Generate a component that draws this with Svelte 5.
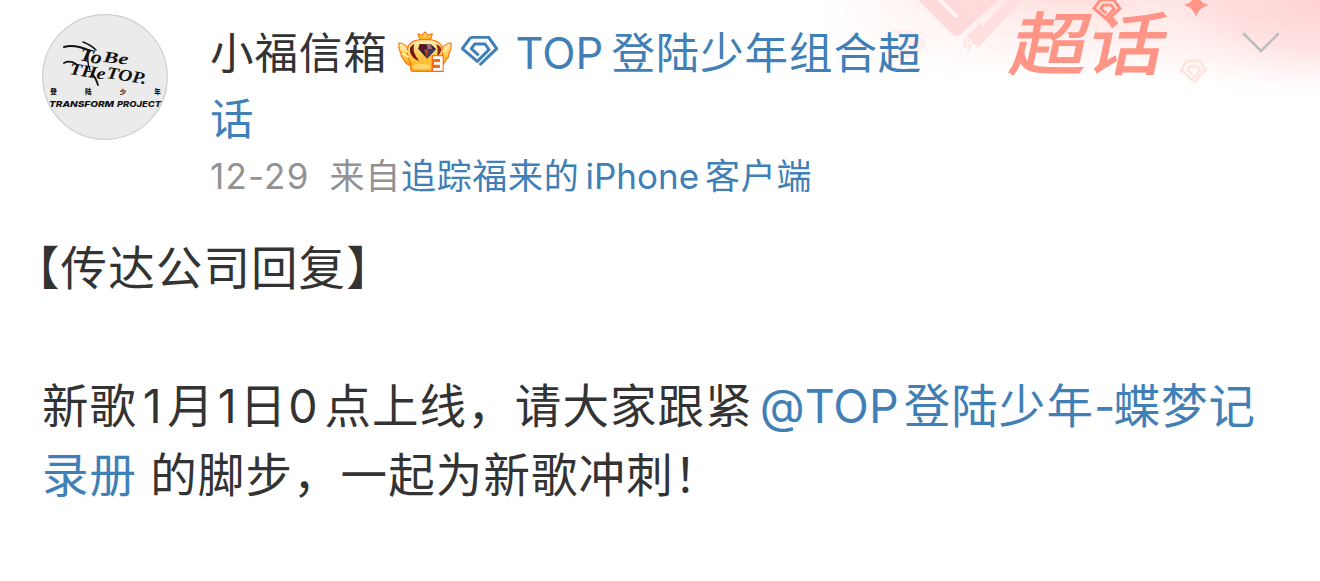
<script>
	const avatarLabel = ["登", "陆", "少", "年"];
	const client = "追踪福来的";
</script>

{#snippet gem()}
	<path d="M29 4H83L107 38L56 87" />
	<path d="M29 4L4 38L49 76L84 41L72 24H41L31 38L53 58" />
{/snippet}

<article class="card">
	<div class="banner">
		<svg class="art" width="500" height="110" viewBox="0 0 500 110">
			<defs>
				<linearGradient id="wash" x1="0.55" y1="0" x2="0.46" y2="1" gradientUnits="objectBoundingBox">
					<stop offset="0" stop-color="#ffe2e1" />
					<stop offset="0.3" stop-color="#ffefed" />
					<stop offset="0.7" stop-color="#fff" />
				</linearGradient>
				<linearGradient id="side" x1="0" y1="0" x2="1" y2="0">
					<stop offset="0" stop-color="#fff" />
					<stop offset="0.45" stop-color="#fff" stop-opacity="0" />
				</linearGradient>
				<radialGradient id="corner" cx="1" cy="0" r="1">
					<stop offset="0" stop-color="#ffd2d5" />
					<stop offset="0.45" stop-color="#ffdcdc" stop-opacity="0.7" />
					<stop offset="1" stop-color="#fff" stop-opacity="0" />
				</radialGradient>
			</defs>
			<rect width="500" height="110" fill="url(#wash)" />
			<rect width="500" height="110" fill="url(#side)" />
			<rect x="280" width="220" height="108" fill="url(#corner)" />
			<path d="M98 0L131 33Q136 38 141 34L178 0Z" fill="#ffdadb" />
			<path d="M118-2L136 16" stroke="#fff3f2" stroke-width="4" stroke-linecap="round" />
			<path d="M203 0L158 48L146 37L160 23L162 26L186 2L184 0Z" fill="#ffdfdf" />
			<path d="M71 30H91L108 44L91 58H71L87 44Z" fill="#ffe9e7" opacity="0.6" />
			<g fill="#ffe9e5">
				<rect x="143" y="39" width="4" height="4" />
				<rect x="148" y="38" width="4" height="4" />
				<rect x="143" y="44" width="4" height="4" />
				<rect x="148" y="44" width="4" height="4" />
				<rect x="147" y="49" width="3" height="3" />
			</g>
			<path d="M376-7Q379 3 389 5Q379 7 376 17Q373 7 364 5Q373 3 376-7Z" fill="#ff9586" />
			<g class="pale" transform="translate(360 60) scale(.24 .26)">{@render gem()}</g>
		</svg>
		<div class="super">超话</div>
		<svg class="super-gem" width="28" height="23" viewBox="0 0 112 92">
			<g class="salmon">
				{@render gem()}
			</g>
		</svg>
	</div>

	<header>
		<svg class="avatar" width="126" height="126" viewBox="0 0 126 126">
			<circle cx="63" cy="63" r="62.3" fill="#ebebeb" stroke="#cecece" stroke-width="1.2" />
			<g class="script">
				<text transform="translate(37 46) rotate(12)" font-size="19" textLength="22" lengthAdjust="spacingAndGlyphs">To</text>
				<text transform="translate(61 48) rotate(6)" font-size="16" textLength="25" lengthAdjust="spacingAndGlyphs">Be</text>
				<text transform="translate(27 60) rotate(9)" font-size="17" textLength="36" lengthAdjust="spacingAndGlyphs">THe</text>
				<text transform="translate(64 64) rotate(9)" font-size="17" textLength="40" lengthAdjust="spacingAndGlyphs">TOP.</text>
			</g>
			<g fill="none" stroke="#111" stroke-linecap="round">
				<path d="M22 33Q33 30 48 37" stroke-width="2" />
				<path d="M41 28Q49 31 54 36M47 36Q44 46 48 56" stroke-width="1.4" />
				<path d="M22 49Q28 46 34 50M50 60Q54 64 56 71" stroke-width="1.8" />
			</g>
			{#each avatarLabel as ch, i}
				<text class="tiny" x={11.5 + i * 34.7} y="80">{ch}</text>
			{/each}
			<text class="wide" x="7" y="92.5" textLength="65" lengthAdjust="spacingAndGlyphs">TRANSFORM</text>
			<text class="wide" x="75" y="92.5" textLength="44" lengthAdjust="spacingAndGlyphs">PROJECT</text>
		</svg>

		<div class="info">
			<div class="name">
				<span>小福信箱</span>
				<svg class="crown" width="54" height="42" viewBox="0 0 162 126">
					<defs>
						<linearGradient id="gold" x1="0" y1="0" x2="0" y2="1">
							<stop offset="0" stop-color="#fff0b8" />
							<stop offset="0.55" stop-color="#ffca45" />
							<stop offset="1" stop-color="#ffab13" />
						</linearGradient>
					</defs>
					<g fill="url(#gold)" stroke="#fb7813" stroke-width="3.5" stroke-linejoin="round">
						<path d="M3 36Q17 36 29 49L38 104Q22 99 17 84Q8 79 9 66Q1 57 3 36Z" />
						<path d="M159 36Q145 36 133 49L124 104Q140 99 145 84Q154 79 153 66Q161 57 159 36Z" />
						<path d="M38 96Q21 62 32 43Q45 24 81 25Q117 24 130 43Q141 62 124 96V113Q124 121 116 121H46Q38 121 38 113Z" />
						<path d="M65 26L60 8L72 13L81 3L90 13L103 8L98 26Z" />
					</g>
					<path d="M12 49L29 63M14 68L33 79M149 49L133 63" stroke="#fff0a8" stroke-width="5" />
					<path d="M49 39Q31 47 37 66Q45 85 63 90Q51 73 47 60Q46 47 49 39Z" fill="#781914" />
					<path d="M114 39Q132 46 130 60Q126 69 117 76Q122 50 114 39Z" fill="#8d2a15" />
					<path d="M65 40H99L114 54L87 83L61 54Z" fill="#35213b" />
					<path d="M65 40H82L78 55H61Z" fill="#611323" />
					<path d="M87 39L98 40L103 54H88Z" fill="#a16b78" />
					<path d="M78 55H91L87 83Z" fill="#c73d26" />
					<path d="M91 55H114L87 83Z" fill="#443e5a" />
					<path d="M45 103Q70 94 98 103V115H45Z" fill="#ffe488" opacity="0.7" />
					<rect x="101" y="72" width="36" height="51" fill="#fb6a12" />
					<path d="M105 80H130V115H105M108 97H130" fill="none" stroke="#fff" stroke-width="8" />
				</svg>
				<svg class="gem" width="37" height="31" viewBox="0 0 111 93">
					{@render gem()}
				</svg>
				<a href="#topic"><span class="en top">TOP</span>登陆少年组合超话</a>
			</div>
			<div class="meta">
				<span class="en date">12-29</span><span>来自</span><a href="#client">{client}<span class="en phone">iPhone</span>客户端</a>
			</div>
		</div>

		<svg class="more" width="38" height="22" viewBox="0 0 38 22">
			<path d="M2 2L19 19L36 2" />
		</svg>
	</header>

	<div class="body">
		<p class="title">【传达公司回复】</p>
		<p>
			新歌<span class="en one">1</span>月<span class="en one second">1</span>日<span class="en zero">0</span>点上线，请大家跟紧<a href="#user"><span class="en at">@TOP</span>登陆少年<span class="en dash">-</span>蝶梦记<br />录册</a><span class="gap"></span>的脚步，一起为新歌冲刺！
		</p>
	</div>
</article>

<style>
	:global(body) {
		margin: 0;
		background: #fff;
	}
	.card {
		position: relative;
		box-sizing: border-box;
		width: 1320px;
		height: 581px;
		padding: 14px 40px 0 42px;
		overflow: hidden;
		color: #333;
		font-family: "Noto Sans CJK SC", sans-serif;
	}
	a {
		color: #417fb7;
		text-decoration: none;
	}
	.en {
		font-family: Inter, "Liberation Sans", sans-serif;
		letter-spacing: 0;
		line-height: 1;
	}

	.banner {
		position: absolute;
		top: 0;
		right: 0;
		width: 500px;
		height: 110px;
	}
	.art {
		display: block;
	}
	.pale {
		fill: none;
		stroke: #ffe5df;
		stroke-width: 11;
	}
	.super {
		position: absolute;
		left: 194px;
		top: 0;
		font-size: 68px;
		line-height: 80px;
		font-weight: 400;
		color: #ff9586;
		-webkit-text-stroke: 1.5px #ff9586;
		transform: skewX(-12deg) scaleX(1.13);
		transform-origin: 0 50%;
	}
	.super-gem {
		position: absolute;
		left: 273px;
		top: -1px;
		overflow: visible;
	}
	.salmon {
		fill: #ffe5e2;
		stroke: #ff8f80;
		stroke-width: 12;
	}

	header {
		position: relative;
		display: flex;
	}
	.avatar {
		flex: none;
	}
	.script {
		font-family: "Liberation Serif", serif;
		font-style: italic;
		font-weight: 700;
		fill: #111;
	}
	.tiny {
		font-size: 6.5px;
		font-weight: 900;
		text-anchor: middle;
		fill: #111;
	}
	.wide {
		font-family: Inter, sans-serif;
		font-size: 8px;
		font-style: italic;
		font-weight: 800;
		fill: #111;
	}
	.info {
		width: 740px;
		margin: 4px 0 0 42px;
	}
	.name {
		font-size: 43.5px;
		line-height: 66px;
		letter-spacing: 0.9px;
	}
	.crown {
		margin-right: -2px;
		vertical-align: -4px;
	}
	.gem {
		margin-right: 7px;
		vertical-align: 2px;
		fill: none;
		stroke: #417fb7;
		stroke-width: 9;
		stroke-linejoin: round;
	}
	.top {
		margin-right: 8px;
	}
	.meta {
		margin-top: -1px;
		font-size: 35px;
		line-height: 50px;
		letter-spacing: 0.7px;
		color: #929292;
		white-space: nowrap;
	}
	.date {
		margin-right: 20px;
		letter-spacing: 1.2px;
	}
	.phone {
		margin: 0 6px;
	}
	.more {
		margin: 18px 0 0 auto;
		fill: none;
		stroke: #b9bfbf;
		stroke-width: 2.6;
		stroke-linecap: round;
	}

	.body {
		margin-top: 31px;
		font-size: 46.5px;
		line-height: 69px;
		letter-spacing: 1.1px;
		white-space: nowrap;
	}
	p {
		margin: 0;
	}
	.title {
		margin: 0 0 69px -29px;
	}
	.one {
		display: inline-block;
		width: 30px;
		text-align: center;
	}
	.second {
		width: 25px;
	}
	.zero {
		display: inline-block;
		width: 37px;
		margin-left: -3px;
		margin-right: 3px;
		text-align: center;
	}
	.at {
		margin: 0 5px 0 7px;
	}
	.dash {
		margin-right: -2px;
	}
	.gap {
		margin-right: 13px;
	}
</style>
